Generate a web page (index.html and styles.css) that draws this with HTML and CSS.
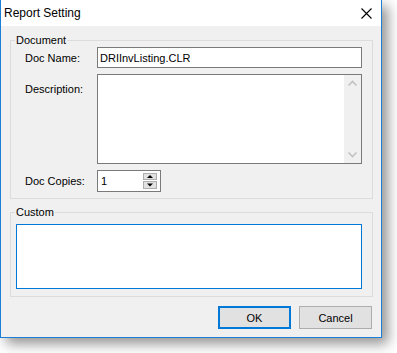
FILE: index.html
```html
<!DOCTYPE html>
<html>
<head>
<meta charset="utf-8">
<link rel="stylesheet" href="styles.css">
</head>
<body>
<div class="window">
  <div class="titlebar">
    <span class="title">Report Setting</span>
    <svg class="close" width="11" height="11" viewBox="0 0 11 11"><path d="M0.5 0.5 L10.5 10.5 M10.5 0.5 L0.5 10.5" stroke="#000" stroke-width="1.1" fill="none"/></svg>
  </div>
  <div class="body">
    <fieldset class="group doc">
      <legend>Document</legend>
      <div class="fields">
        <div class="row">
          <label class="lbl">Doc Name:</label>
          <div class="input">DRIInvListing.CLR</div>
        </div>
        <div class="row top">
          <label class="lbl desc">Description:</label>
          <div class="memo">
            <div class="memo-text"></div>
            <div class="vscroll">
              <svg width="17" height="17" viewBox="0 0 17 17"><polyline points="4.5,10.5 8.5,6.5 12.5,10.5" fill="none" stroke="#c2c2c2" stroke-width="1.6"/></svg>
              <svg width="17" height="17" viewBox="0 0 17 17"><polyline points="4.5,6.5 8.5,10.5 12.5,6.5" fill="none" stroke="#c2c2c2" stroke-width="1.6"/></svg>
            </div>
          </div>
        </div>
        <div class="row">
          <label class="lbl">Doc Copies:</label>
          <div class="spin">
            <span class="spin-val">1</span>
            <div class="spin-btns">
              <span class="spin-btn up"><svg width="12" height="5" viewBox="0 0 12 5"><polygon points="3,4 9,4 6,1" fill="#000"/></svg></span>
              <span class="spin-btn down"><svg width="12" height="6" viewBox="0 0 12 6"><polygon points="3,1.5 9,1.5 6,4.5" fill="#000"/></svg></span>
            </div>
          </div>
        </div>
      </div>
    </fieldset>
    <fieldset class="group custom">
      <legend>Custom</legend>
      <div class="custom-box"></div>
    </fieldset>
    <div class="buttons">
      <button class="btn default">OK</button>
      <button class="btn">Cancel</button>
    </div>
  </div>
</div>
</body>
</html>
```
FILE: styles.css
```css
html, body {
  margin: 0;
  background: #fff;
}
body {
  font-family: "Liberation Sans", Arial, sans-serif;
  font-size: 11px;
  color: #000;
  min-height: 353px;
  padding: 0 15px 15px 0;
  box-sizing: border-box;
}
.window {
  width: 380px;
  height: 337px;
  border: 1px solid #1c7fd6;
  border-top: 0;
  box-shadow: 6px 6px 12px rgba(0, 0, 0, 0.42);
  display: flex;
  flex-direction: column;
  background: #f0f0f0;
}
.titlebar {
  height: 26px;
  background: #fff;
  display: flex;
  align-items: center;
  justify-content: space-between;
  padding: 0 9px 0 3px;
  flex: none;
}
.title {
  font-size: 12px;
}
.close {
  display: block;
}
.body {
  flex: 1;
  padding: 7px 8px 8px 9px;
  display: flex;
  flex-direction: column;
}
.group {
  margin: 0;
  min-width: 0;
  border: 1px solid #dcdcdc;
  padding: 0 10px 6px 4px;
}
.group legend {
  padding: 0 1px;
  line-height: 14px;
  font-size: 11px;
}
.fields {
  padding-left: 10px;
  display: flex;
  flex-direction: column;
  gap: 6px;
}
.row {
  display: flex;
  align-items: center;
}
.row.top {
  align-items: flex-start;
}
.lbl {
  width: 72px;
  flex: none;
}
.lbl.desc {
  padding-top: 9px;
}
.input {
  width: 265px;
  height: 21px;
  box-sizing: border-box;
  border: 1px solid #7a7a7a;
  background: #fff;
  padding-left: 2px;
  display: flex;
  align-items: center;
}
.memo {
  width: 265px;
  height: 90px;
  box-sizing: border-box;
  border: 1px solid #7a7a7a;
  background: #fff;
  display: flex;
}
.memo-text {
  flex: 1;
}
.vscroll {
  width: 17px;
  background: #f0f0f0;
  display: flex;
  flex-direction: column;
  justify-content: space-between;
}
.vscroll svg {
  display: block;
}
.spin {
  width: 64px;
  height: 22px;
  box-sizing: border-box;
  border: 1px solid #7a7a7a;
  background: #fff;
  display: flex;
  justify-content: space-between;
  align-items: stretch;
}
.spin-val {
  padding-left: 3px;
  display: flex;
  align-items: center;
}
.spin-btns {
  display: flex;
  flex-direction: column;
  gap: 1px;
  padding: 2px 3px 2px 0;
}
.spin-btn {
  width: 14px;
  box-sizing: border-box;
  border: 1px solid #adadad;
  background: #e1e1e1;
  display: flex;
  align-items: center;
  justify-content: center;
}
.spin-btn svg {
  display: block;
}
.spin-btn.up {
  height: 7px;
}
.spin-btn.down {
  height: 8px;
}
.group.custom {
  margin-top: 6px;
  padding: 0 10px 7px 4px;
}
.custom-box {
  margin-top: 5px;
  margin-left: 1px;
  height: 65px;
  box-sizing: border-box;
  border: 1px solid #0078d7;
  background: #fff;
}
.buttons {
  margin-top: 9px;
  display: flex;
  justify-content: flex-end;
  gap: 8px;
  padding-right: 1px;
}
.btn {
  width: 73px;
  height: 23px;
  box-sizing: border-box;
  border: 1px solid #adadad;
  background: #e1e1e1;
  font-family: "Liberation Sans", Arial, sans-serif;
  font-size: 11px;
  color: #000;
  padding: 0;
  margin: 0;
}
.btn.default {
  border: 2px solid #0078d7;
}
```
